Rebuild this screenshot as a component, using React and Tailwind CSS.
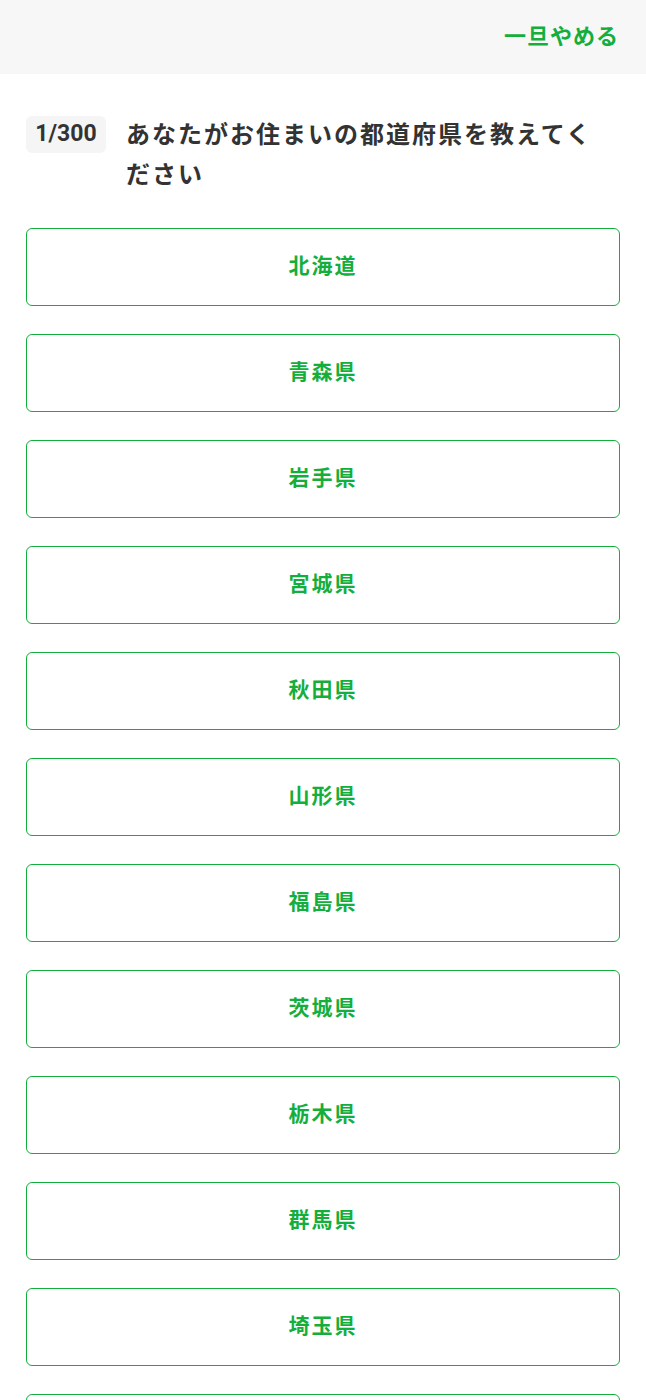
import React from "react";

const prefs = ["北海道","青森県","岩手県","宮城県","秋田県","山形県","福島県","茨城県","栃木県","群馬県","埼玉県","千葉県","東京都"];

export default function App() {
  return (
    <div className="min-h-screen bg-white" style={{ fontFamily: 'Roboto, "Noto Sans CJK JP", sans-serif' }}>
      <header className="h-[74px] bg-[#f7f7f7] flex items-center justify-end pr-[27px]">
        <button className="text-[22px] tracking-[1px] font-bold text-[#14ae3c] leading-none">一旦やめる</button>
      </header>
      <main className="px-[26px] pt-[42px]">
        <div className="flex items-start gap-[20px]">
          <span className="shrink-0 w-[80px] h-[37px] rounded-[6px] bg-[#f5f5f5] flex items-center justify-center text-[23px] font-bold text-[#333]">1/300</span>
          <h1 className="pr-[20px] text-[24px] tracking-[2px] font-bold leading-[40px] text-[#333] -mt-[1px]">あなたがお住まいの都道府県を教えてください</h1>
        </div>
        <div className="mt-[33px] flex flex-col gap-[28px]">
          {prefs.map((p) => (
            <button key={p} className="h-[78px] w-full rounded-[6px] border-[1.5px] border-[#14ae3c] bg-white text-[21px] tracking-[2px] font-bold text-[#14ae3c] flex items-center justify-center">
              {p}
            </button>
          ))}
        </div>
      </main>
    </div>
  );
}
